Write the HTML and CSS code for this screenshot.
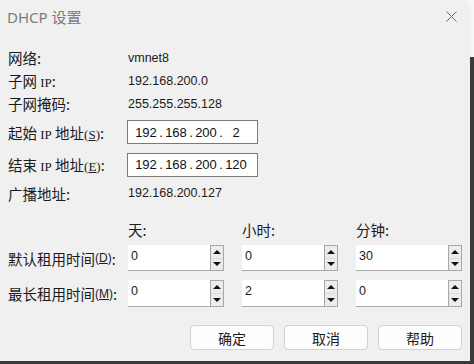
FILE: index.html
```html
<!DOCTYPE html>
<html lang="zh-CN">
<head>
  <meta charset="UTF-8" />
  <title>DHCP 设置</title>
  <link rel="stylesheet" href="styles.css">
</head>
<body>
  <div class="window">
    <div class="titlebar">
      <div class="title">DHCP 设置</div>
      <div class="close">
        <svg width="11" height="11" viewBox="0 0 11 11"><path d="M0.5 0.5L10.5 10.5M10.5 0.5L0.5 10.5" stroke="#6a6a6a" stroke-width="1"/></svg>
      </div>
    </div>

    <div class="info">
      <div class="row r1"><span class="label">网络:</span><span class="value">vmnet8</span></div>
      <div class="row r2"><span class="label">子网 <span class="lat">IP</span>:</span><span class="value">192.168.200.0</span></div>
      <div class="row r3"><span class="label">子网掩码:</span><span class="value">255.255.255.128</span></div>
      <div class="row r4">
        <span class="label">起始 <span class="lat">IP</span> 地址<span class="lat">(<u>S</u>)</span>:</span>
        <div class="ipbox"><span>192</span><i>.</i><span>168</span><i>.</i><span>200</span><i>.</i><span>2</span></div>
      </div>
      <div class="row r5">
        <span class="label">结束 <span class="lat">IP</span> 地址<span class="lat">(<u>E</u>)</span>:</span>
        <div class="ipbox"><span>192</span><i>.</i><span>168</span><i>.</i><span>200</span><i>.</i><span>120</span></div>
      </div>
      <div class="row r6"><span class="label">广播地址:</span><span class="value">192.168.200.127</span></div>
    </div>

    <div class="lease">
      <div class="lease-row">
        <div class="label"></div>
        <div class="head">天:</div>
        <div class="head">小时:</div>
        <div class="head wide">分钟:</div>
      </div>
      <div class="lease-row spins">
        <div class="label">默认租用时间<span class="lat small">(<u>D</u>)</span>:</div>
        <div class="spin"><span class="num">0</span><span class="arrows"><b class="up"></b><b class="down"></b></span></div>
        <div class="spin"><span class="num">0</span><span class="arrows"><b class="up"></b><b class="down"></b></span></div>
        <div class="spin wide"><span class="num">30</span><span class="arrows"><b class="up"></b><b class="down"></b></span></div>
      </div>
      <div class="lease-row spins tall">
        <div class="label">最长租用时间<span class="lat small">(<u>M</u>)</span>:</div>
        <div class="spin"><span class="num">0</span><span class="arrows"><b class="up"></b><b class="down"></b></span></div>
        <div class="spin"><span class="num">2</span><span class="arrows"><b class="up"></b><b class="down"></b></span></div>
        <div class="spin wide"><span class="num">0</span><span class="arrows"><b class="up"></b><b class="down"></b></span></div>
      </div>
    </div>

    <div class="buttons">
      <button>确定</button>
      <button>取消</button>
      <button>帮助</button>
    </div>
  </div>
</body>
</html>
```

FILE: styles.css
```css
body {
  margin: 0;
  width: 474px;
  height: 364px;
  overflow: hidden;
  background: linear-gradient(#f6f6f6 0, #f6f6f6 57px, #3a3a3a 57px);
  font-family: "Noto Sans CJK SC", "Noto Sans", sans-serif;
  color: #1b1b1b;
}
.window {
  width: 470px;
  height: 361px;
  background: #f0f0f0;
  border-top-right-radius: 8px;
  box-sizing: border-box;
}
.titlebar {
  height: 33px;
  display: flex;
  align-items: center;
  justify-content: space-between;
  padding: 0 13px 0 7px;
}
.title {
  font-family: "Noto Sans", "Noto Sans CJK SC", sans-serif;
  font-size: 15px;
  color: #7c7c7c;
}
.close {
  display: flex;
}
.info {
  margin-top: 13px;
  padding-left: 8px;
}
.row {
  display: flex;
  align-items: center;
}
.r1, .r2, .r3 { height: 23px; }
.r4 { height: 34px; }
.r5 { height: 31px; }
.r6 { height: 26px; }
.label {
  width: 119px;
  font-size: 14.5px;
  white-space: nowrap;
}
.lat {
  font-family: "Liberation Serif", serif;
  font-size: 13px;
}
.lat.small {
  font-family: "Liberation Sans", sans-serif;
  font-size: 12px;
}
.value {
  font-family: "Liberation Sans", sans-serif;
  font-size: 12.5px;
  padding-left: 1px;
}
.ipbox {
  width: 131px;
  height: 24px;
  box-sizing: border-box;
  border: 1px solid #7a7a7a;
  background: #fff;
  display: flex;
  align-items: center;
  padding-left: 7px;
  font-family: "Liberation Sans", sans-serif;
  font-size: 13px;
  color: #111;
}
.ipbox span {
  width: 22px;
  text-align: center;
}
.ipbox i {
  font-style: normal;
  width: 8px;
  text-align: center;
}
.lease {
  margin-top: 4px;
  padding-left: 8px;
  display: flex;
  flex-direction: column;
  gap: 9px;
}
.lease-row {
  display: flex;
  gap: 18px;
  height: 26px;
  align-items: flex-end;
}
.lease-row .label {
  width: 102px;
  flex: none;
}
.lease-row.spins {
  align-items: stretch;
}
.lease-row.spins .label {
  display: flex;
  align-items: center;
}
.lease-row.tall {
  height: 27px;
}
.head {
  width: 96px;
  font-size: 14.5px;
  line-height: 18px;
  margin-bottom: -3px;
}
.spin {
  width: 96px;
  flex: none;
  background: #fff;
  border-bottom: 1px solid #a9a9a9;
  box-sizing: border-box;
  display: flex;
  justify-content: space-between;
}
.wide {
  width: 106px;
}
.spin .num {
  font-family: "Liberation Sans", sans-serif;
  font-size: 12.5px;
  padding: 4px 0 0 3px;
}
.arrows {
  width: 12px;
  border: 1px solid #a8a8a8;
  background: #dcdcdc;
  display: flex;
  flex-direction: column;
  gap: 1px;
  margin-bottom: -1px;
}
.arrows b {
  flex: 1;
  background: #ececec;
  display: flex;
  align-items: center;
  justify-content: center;
}
.arrows b::after {
  content: "";
  border-left: 4px solid transparent;
  border-right: 4px solid transparent;
}
.arrows .up::after {
  border-bottom: 4px solid #111;
}
.arrows .down::after {
  border-top: 4px solid #111;
}
.buttons {
  margin-top: 18px;
  padding-right: 8px;
  display: flex;
  justify-content: flex-end;
  gap: 10px;
}
button {
  width: 84px;
  height: 25px;
  border: 1px solid #d2d2d2;
  border-radius: 4px;
  background: #fdfdfd;
  font-family: "Noto Sans CJK SC", sans-serif;
  font-size: 14px;
  color: #1b1b1b;
  padding: 0;
}
```
